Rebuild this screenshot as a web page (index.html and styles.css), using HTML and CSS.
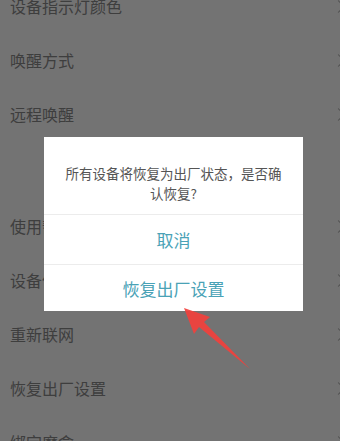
FILE: index.html
```html
<!DOCTYPE html>
<html>
	<head>
		<meta charset="UTF-8">
		<title>设置</title>
		<link rel="stylesheet" href="styles.css">
	</head>
	<body>
		<div class="page">
			<ul class="list">
				<li class="item"><span>设备指示灯颜色</span><i class="arrow"></i></li>
				<li class="item"><span>唤醒方式</span><i class="arrow"></i></li>
				<li class="item"><span>远程唤醒</span><i class="arrow"></i></li>
				<li class="gap"></li>
				<li class="item"><span>使用帮助</span><i class="arrow"></i></li>
				<li class="item"><span>设备信息</span><i class="arrow"></i></li>
				<li class="item"><span>重新联网</span><i class="arrow"></i></li>
				<li class="item"><span>恢复出厂设置</span><i class="arrow"></i></li>
				<li class="item"><span>绑定魔盒</span><i class="arrow"></i></li>
			</ul>
		</div>

		<div class="mask"></div>

		<div class="dialog">
			<p class="msg">所有设备将恢复为出厂状态，是否确认恢复?</p>
			<div class="btn">取消</div>
			<div class="btn">恢复出厂设置</div>
		</div>

		<svg class="pointer" width="340" height="441" viewBox="0 0 340 441">
			<polygon points="184,308 210,317 204,322 250,369 199,327 194,334" fill="#f2403c" opacity="0.92" />
		</svg>
	</body>
</html>
```

FILE: styles.css
```css
body{
	margin: 0;
	width: 340px;
	height: 441px;
	overflow: hidden;
	position: relative;
	background-color: #fff;
	font-family: "Noto Sans CJK SC", "Noto Sans", sans-serif;
}
.list{
	list-style: none;
	margin: -21px 0 0 0;
	padding: 0;
}
.item{
	height: 54px;
	display: flex;
	align-items: center;
	justify-content: space-between;
	padding-left: 10px;
	font-size: 16px;
	color: #8a8a8a;
}
.gap{
	height: 58px;
}
.arrow{
	width: 8px;
	height: 8px;
	border-top: 1.5px solid #a8a8a8;
	border-right: 1.5px solid #a8a8a8;
	transform: rotate(45deg);
	margin-right: -3px;
}
.mask{
	position: absolute;
	top: 0;
	left: 0;
	right: 0;
	bottom: 0;
	background-color: rgba(0,0,0,0.55);
}
.dialog{
	position: absolute;
	left: 44px;
	top: 137px;
	width: 259px;
	height: 174px;
	background-color: #fff;
}
.msg{
	margin: 0;
	height: 78px;
	box-sizing: border-box;
	padding: 26px 20px 0;
	font-size: 13.5px;
	line-height: 20px;
	color: #555;
	text-align: center;
	border-bottom: 1px solid #ececec;
}
.btn{
	height: 49px;
	display: flex;
	align-items: center;
	justify-content: center;
	font-size: 17px;
	color: #4aa2b6;
	border-bottom: 1px solid #ececec;
}
.btn:last-child{
	height: 46px;
	border-bottom: none;
}
.pointer{
	position: absolute;
	top: 0;
	left: 0;
}
```
